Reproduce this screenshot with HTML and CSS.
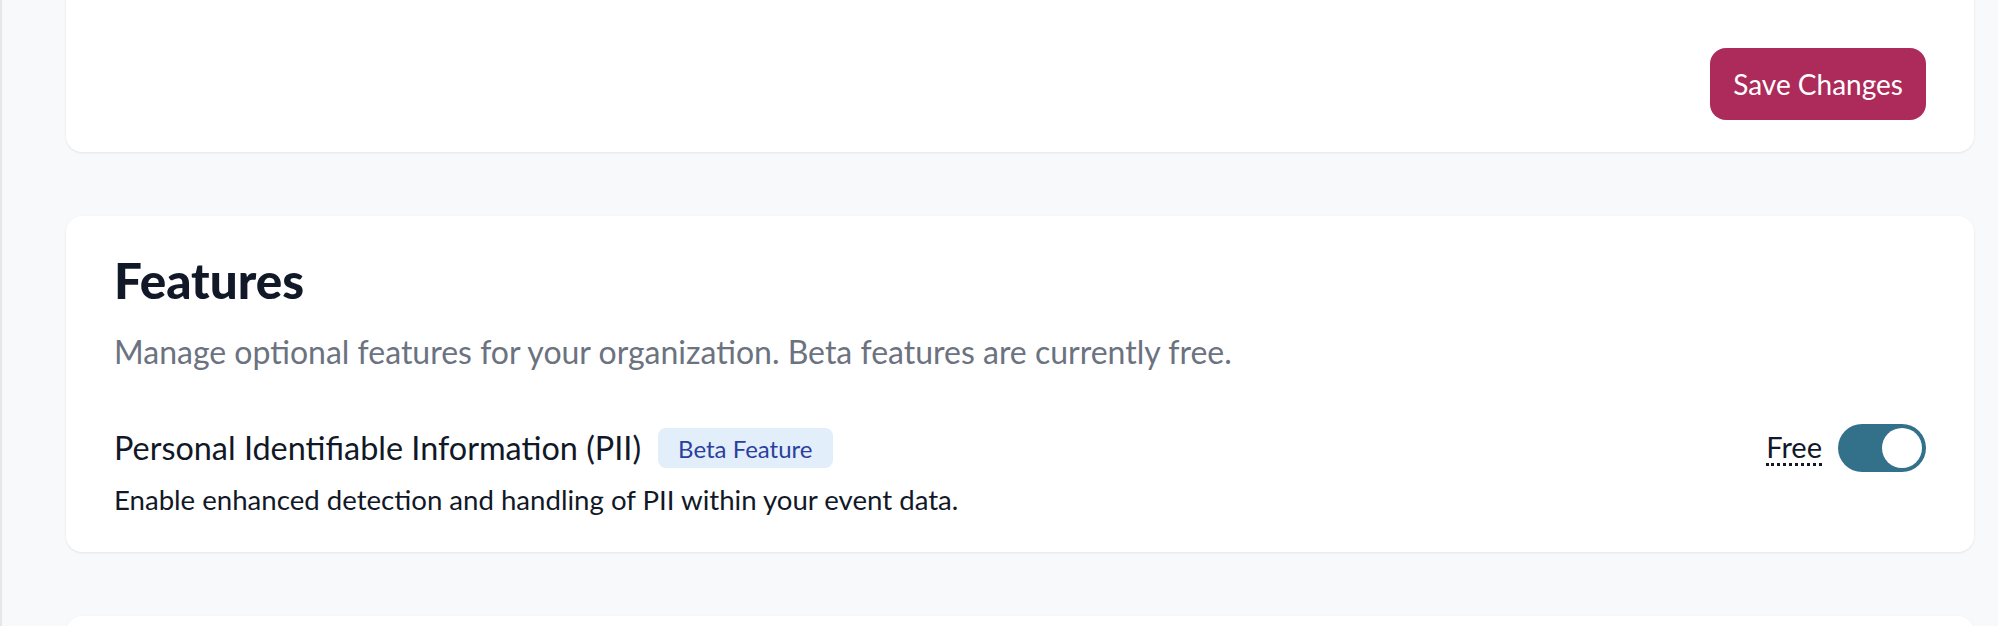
FILE: index.html
```html
<!DOCTYPE html>
<html lang="en">
<head>
<meta charset="utf-8">
<title>Organization Settings</title>
<link rel="stylesheet" href="styles.css">
</head>
<body>
<div class="layout">
  <div class="rail"></div>
  <main class="main">
    <section class="card card-top">
      <div class="actions">
        <button class="btn-primary" type="button">Save Changes</button>
      </div>
    </section>

    <section class="card">
      <h2 class="card-title">Features</h2>
      <p class="card-desc">Manage optional features for your organization. Beta features are currently free.</p>
      <div class="feature">
        <div class="feature-info">
          <div class="feature-head">
            <span class="feature-name">Personal Identifiable Information (PII)</span>
            <span class="badge">Beta Feature</span>
          </div>
          <p class="feature-text">Enable enhanced detection and handling of PII within your event data.</p>
        </div>
        <div class="feature-control">
          <abbr class="price" title="Free during beta">Free</abbr>
          <span class="toggle on" role="switch" aria-checked="true"><span class="knob"></span></span>
        </div>
      </div>
    </section>

    <section class="card card-next"></section>
  </main>
</div>
</body>
</html>
```

FILE: styles.css
```css
* { box-sizing: border-box; }
html, body { margin: 0; padding: 0; }
body {
  background: #f8f9fb;
  font-family: Lato, "Open Sans", "Liberation Sans", sans-serif;
  color: #111827;
  overflow: hidden;
  height: 626px;
}
.layout {
  display: flex;
  min-height: 626px;
}
.rail {
  width: 2px;
  flex: none;
  background: #e5e7eb;
}
.main {
  flex: 1;
  padding: 0 24px 0 64px;
  display: flex;
  flex-direction: column;
  gap: 64px;
}
.card {
  background: #ffffff;
  border-radius: 16px;
  box-shadow: 0 1px 3px rgba(17, 24, 39, 0.06), 0 1px 2px rgba(17, 24, 39, 0.03);
  padding: 32px 48px;
}
.card-top {
  margin-top: -40px;
  padding-top: 88px;
}
.actions {
  display: flex;
  justify-content: flex-end;
}
.btn-primary {
  background: #ad2b5a;
  color: #ffffff;
  border: none;
  border-radius: 16px;
  height: 72px;
  padding: 0 23px;
  font-family: inherit;
  font-size: 28px;
  line-height: 40px;
}
.card-title {
  margin: 0;
  font-size: 49.4px;
  line-height: 64px;
  font-weight: 900;
  color: #111827;
}
.card-desc {
  margin: 16px 0 0;
  font-size: 32px;
  line-height: 48px;
  color: #6b7280;
}
.feature {
  margin-top: 48px;
  display: flex;
  justify-content: space-between;
  align-items: flex-start;
}
.feature-head {
  display: flex;
  align-items: center;
  gap: 17px;
  height: 48px;
}
.feature-name {
  font-size: 32.4px;
  line-height: 48px;
  color: #111827;
}
.badge {
  background: #e3eefb;
  color: #2b3f9e;
  border-radius: 8px;
  height: 40px;
  padding: 0 20px;
  display: inline-flex;
  align-items: center;
  font-size: 24px;
}
.feature-text {
  margin: 8px 0 0;
  font-size: 27.6px;
  line-height: 40px;
  color: #111827;
}
.feature-control {
  display: flex;
  align-items: center;
  gap: 16px;
  height: 48px;
}
.price {
  font-size: 29px;
  line-height: 32px;
  color: #111827;
  text-decoration: none;
  border-bottom: 3px dotted #111827;
}
.toggle {
  width: 88px;
  height: 48px;
  border-radius: 24px;
  background: #33718b;
  display: flex;
  align-items: center;
  justify-content: flex-end;
  padding: 4px;
}
.knob {
  width: 40px;
  height: 40px;
  border-radius: 50%;
  background: #ffffff;
}
.card-next {
  height: 120px;
}
```
